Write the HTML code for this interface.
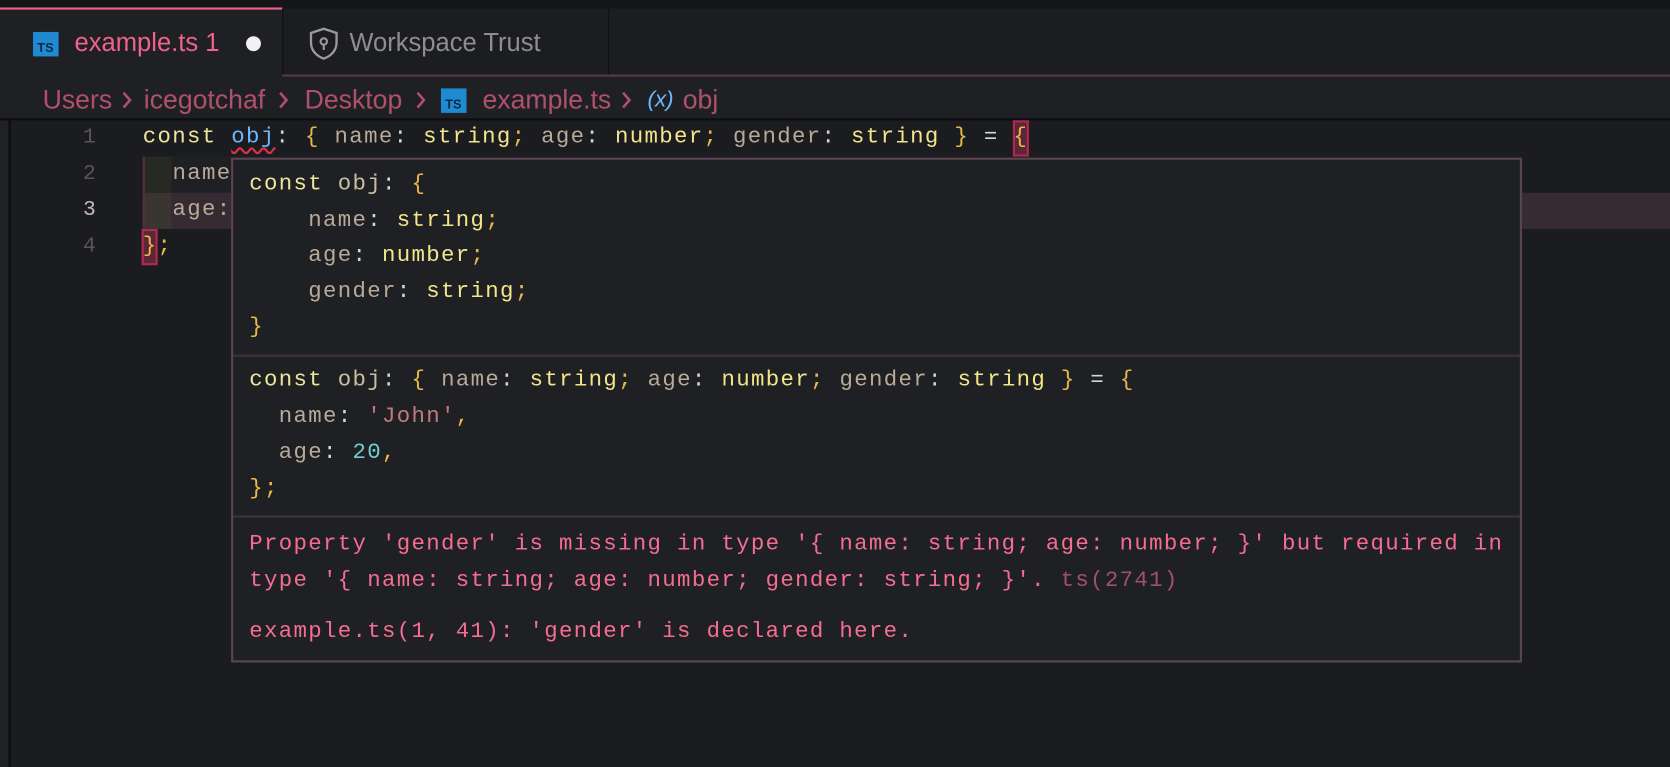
<!DOCTYPE html>
<html><head><meta charset="utf-8"><style>
*{margin:0;padding:0;box-sizing:border-box}
body{width:1670px;height:766px;background:#1b1c1f;overflow:hidden;position:relative;font-family:"Liberation Sans",sans-serif}
#w{position:absolute;left:0;top:0;width:1568px;height:720px;transform:scale(1.06505);transform-origin:0 0}
.abs{position:absolute}
.code{font-family:"Liberation Mono",monospace;font-size:21px;letter-spacing:1.25px;white-space:pre;line-height:34px}
.k{color:#ece59c}.o{color:#c9c0a0}.v{color:#6cb6ff}.p{color:#b9aa98}.t{color:#f3e58a}.c{color:#d6d6d6}.b{color:#e9b84a}.s{color:#c27a78}.n{color:#6fcfcf}
.e{color:#f56d92}.d{color:#a0506c}
.ln{position:absolute;left:50px;width:40px;text-align:right;color:#5c5458;font-family:"Liberation Mono",monospace;font-size:20px;line-height:34px}
.bc{position:absolute;top:79px;font-size:25px;color:#b0506c;line-height:30px;white-space:nowrap}
</style></head><body><div id="w">
<div class="abs" style="left:0;top:0;width:1568px;height:8px;background:#141517"></div>
<div class="abs" style="left:0;top:8px;width:1568px;height:64px;background:#1c1d20"></div>
<div class="abs" style="left:0;top:7px;width:265px;height:66px;background:#1f2023;border-top:2px solid #f0628a"></div>
<div class="abs" style="left:265px;top:8px;width:307px;height:62px;border-right:1px solid #0f0f11;border-left:1px solid #0f0f11"></div>
<div class="abs" style="left:265px;top:70px;width:1303px;height:2px;background:#5c3c4a"></div>
<div class="abs" style="left:31px;top:30px;width:24px;height:23px;background:#1f8ad2"><span style="position:absolute;left:4px;top:8px;font-size:12px;font-weight:bold;color:#0c2a44;line-height:14px">TS</span></div>
<div class="abs" style="left:70px;top:25px;font-size:24px;color:#f0628a;line-height:32px">example.ts 1</div>
<div class="abs" style="left:231px;top:34px;width:14px;height:14px;border-radius:50%;background:#f2f2f2"></div>
<svg class="abs" style="left:289px;top:25px" width="30" height="32" viewBox="0 0 30 32"><path d="M15 2 L27 6 V15 C27 23 21 28 15 30 C9 28 3 23 3 15 V6 Z" fill="none" stroke="#9a9a9a" stroke-width="2.2"/><circle cx="15" cy="14" r="3" fill="none" stroke="#9a9a9a" stroke-width="2"/><path d="M15 17 V22" stroke="#9a9a9a" stroke-width="2"/></svg>
<div class="abs" style="left:328px;top:25px;font-size:24px;color:#8e8e8e;line-height:32px">Workspace Trust</div>
<div class="abs" style="left:0;top:72px;width:1568px;height:41px;background:#1f2023;border-bottom:2px solid #0e0e10"></div>
<div class="bc" style="left:40px">Users</div>
<svg class="abs" style="left:113px;top:84px" width="12" height="20" viewBox="0 0 12 20"><path d="M3 3 L9 10 L3 17" fill="none" stroke="#b0506c" stroke-width="2.4"/></svg>
<div class="bc" style="left:135px">icegotchaf</div>
<svg class="abs" style="left:260px;top:84px" width="12" height="20" viewBox="0 0 12 20"><path d="M3 3 L9 10 L3 17" fill="none" stroke="#b0506c" stroke-width="2.4"/></svg>
<div class="bc" style="left:286px">Desktop</div>
<svg class="abs" style="left:389px;top:84px" width="12" height="20" viewBox="0 0 12 20"><path d="M3 3 L9 10 L3 17" fill="none" stroke="#b0506c" stroke-width="2.4"/></svg>
<div class="abs" style="left:414px;top:83px;width:24px;height:23px;background:#1f8ad2"><span style="position:absolute;left:4px;top:8px;font-size:12px;font-weight:bold;color:#0c2a44;line-height:14px">TS</span></div>
<div class="bc" style="left:453px">example.ts</div>
<svg class="abs" style="left:582px;top:84px" width="12" height="20" viewBox="0 0 12 20"><path d="M3 3 L9 10 L3 17" fill="none" stroke="#b0506c" stroke-width="2.4"/></svg>
<div class="bc" style="left:608px;font-size:21px;color:#6cb6ff;font-style:italic">(x)</div>
<div class="bc" style="left:641px">obj</div>
<div class="abs" style="left:0;top:113px;width:8px;height:607px;background:#202124"></div>
<div class="abs" style="left:8px;top:113px;width:2px;height:607px;background:#0c0c0e"></div>
<div class="abs" style="left:134px;top:147px;width:27px;height:34px;background:#262a22"></div>
<div class="abs" style="left:161px;top:147px;width:56px;height:34px;background:#1f2023"></div>
<div class="abs" style="left:134px;top:181px;width:27px;height:34px;background:#3a3530"></div>
<div class="abs" style="left:161px;top:181px;width:1407px;height:34px;background:#362b32"></div>
<div class="abs" style="left:134px;top:147px;width:2px;height:68px;background:#5a2d3c"></div>
<div class="abs" style="left:951px;top:113px;width:15px;height:34px;background:#5a2638;border:2px solid #b02a50"></div>
<div class="abs" style="left:133px;top:215px;width:15px;height:34px;background:#5a2638;border:2px solid #b02a50"></div>
<div class="ln" style="top:113px">1</div>
<div class="ln" style="top:147px">2</div>
<div class="ln" style="top:181px;color:#c8b8c0">3</div>
<div class="ln" style="top:215px">4</div>
<div class="abs code" style="left:134px;top:113px"><span class="k">const </span><span class="v" style="text-decoration:underline wavy #e0304a;text-underline-offset:4px">obj</span><span class="c">: </span><span class="b">{ </span><span class="p">name</span><span class="c">: </span><span class="t">string</span><span class="b">; </span><span class="p">age</span><span class="c">: </span><span class="t">number</span><span class="b">; </span><span class="p">gender</span><span class="c">: </span><span class="t">string</span><span class="b"> } </span><span class="c">= </span><span class="b">{</span></div>
<div class="abs code p" style="left:162px;top:147px">name</div>
<div class="abs code p" style="left:162px;top:181px">age:</div>
<div class="abs code" style="left:134px;top:215px"><span class="b">}</span><span class="b">;</span></div>
<div class="abs" style="left:217px;top:148px;width:1212px;height:474px;background:#1f2023;border:2px solid #5a4550"></div>
<div class="abs" style="left:219px;top:333px;width:1208px;height:2px;background:#3e3338"></div>
<div class="abs" style="left:219px;top:484px;width:1208px;height:2px;background:#3e3338"></div>
<div class="abs code" style="left:234px;top:157px;line-height:33.6px"><span class="k">const </span><span class="o">obj</span><span class="c">: </span><span class="b">{</span>
<span class="p">    name</span><span class="c">: </span><span class="t">string</span><span class="b">;</span>
<span class="p">    age</span><span class="c">: </span><span class="t">number</span><span class="b">;</span>
<span class="p">    gender</span><span class="c">: </span><span class="t">string</span><span class="b">;</span>
<span class="b">}</span></div>
<div class="abs code" style="left:234px;top:341px;line-height:34px"><span class="k">const </span><span class="o">obj</span><span class="c">: </span><span class="b">{ </span><span class="p">name</span><span class="c">: </span><span class="t">string</span><span class="b">; </span><span class="p">age</span><span class="c">: </span><span class="t">number</span><span class="b">; </span><span class="p">gender</span><span class="c">: </span><span class="t">string</span><span class="b"> } </span><span class="c">= </span><span class="b">{</span>
<span class="p">  name</span><span class="c">: </span><span class="s">'John'</span><span class="b">,</span>
<span class="p">  age</span><span class="c">: </span><span class="n">20</span><span class="b">,</span>
<span class="b">};</span></div>
<div class="abs code e" style="left:234px;top:495px;line-height:33.5px">Property 'gender' is missing in type '{ name: string; age: number; }' but required in
type '{ name: string; age: number; gender: string; }'. <span class="d">ts(2741)</span></div>
<div class="abs code e" style="left:234px;top:577px">example.ts(1, 41): 'gender' is declared here.</div>
</div></body></html>
